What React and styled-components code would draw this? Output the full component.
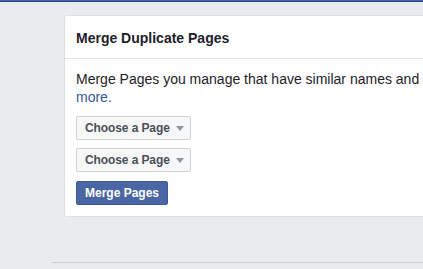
import React from "react";
import styled, { createGlobalStyle } from "styled-components";

const Global = createGlobalStyle`
  html, body {
    margin: 0;
    padding: 0;
    background: #e9ebee;
    overflow: hidden;
    font-family: "Liberation Sans", Arial, Helvetica, sans-serif;
  }
`;

const TopBar = styled.div`
  height: 1px;
  background: #4267b2;
  border-bottom: 1px solid #29487d;
`;

const Main = styled.div`
  padding-left: 52px;
  width: 800px;
`;

const Card = styled.div`
  margin: 13px 0 0 12px;
  width: 600px;
  background: #fff;
  border: 1px solid #dddfe2;
  border-radius: 3px;
`;

const Header = styled.div`
  padding: 13px 11px 11px;
  border-bottom: 1px solid #e5e5e5;
  font-size: 14px;
  line-height: 18px;
  font-weight: bold;
  color: #1d2129;
`;

const Body = styled.div`
  padding: 11px 11px 11px;
  display: flex;
  flex-direction: column;
  align-items: flex-start;
  gap: 8px;
`;

const Intro = styled.p`
  margin: 0 0 2px;
  font-size: 14px;
  line-height: 18px;
  color: #1d2129;
  width: 575px;

  a {
    color: #365899;
    text-decoration: none;
  }
`;

const Select = styled.button`
  display: flex;
  align-items: center;
  gap: 6px;
  height: 24px;
  padding: 0 6px 0 8px;
  background: #f6f7f9;
  border: 1px solid #ced0d4;
  border-radius: 2px;
  font-family: inherit;
  font-size: 12px;
  font-weight: bold;
  letter-spacing: -0.1px;
  color: #4b4f56;
  cursor: pointer;
`;

const Arrow = styled.span`
  width: 0;
  height: 0;
  border-left: 4.5px solid transparent;
  border-right: 4.5px solid transparent;
  border-top: 5px solid #90949c;
  margin-top: 1px;
`;

const Primary = styled.button`
  height: 24px;
  margin-top: 1px;
  padding: 0 8px;
  background: #4a66a4;
  border: 1px solid #3d5a96;
  border-radius: 2px;
  font-family: inherit;
  font-size: 12px;
  font-weight: bold;
  color: #fff;
  cursor: pointer;
`;

const Footer = styled.div`
  margin-top: 45px;
  border-top: 1px solid #ccd0d5;
  height: 20px;
`;

export default function App() {
  return (
    <>
      <Global />
      <TopBar />
      <Main>
        <Card>
          <Header>Merge Duplicate Pages</Header>
          <Body>
            <Intro>
              Merge Pages you manage that have similar names and represent the
              same thing. <a href="#">Learn more.</a>
            </Intro>
            <Select>
              Choose a Page <Arrow />
            </Select>
            <Select>
              Choose a Page <Arrow />
            </Select>
            <Primary>Merge Pages</Primary>
          </Body>
        </Card>
        <Footer />
      </Main>
    </>
  );
}
